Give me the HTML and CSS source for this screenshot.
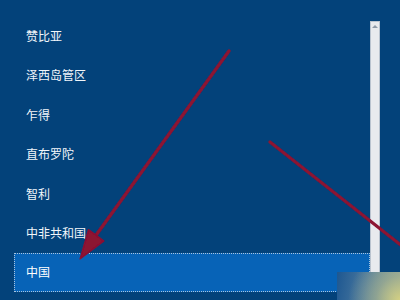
FILE: index.html
```html
<!DOCTYPE html>
<html lang="zh">
<head>
<meta charset="utf-8">
<link rel="stylesheet" href="styles.css">
</head>
<body>
<div class="screen">
  <ul class="list">
    <li class="item">赞比亚</li>
    <li class="item">泽西岛管区</li>
    <li class="item">乍得</li>
    <li class="item">直布罗陀</li>
    <li class="item">智利</li>
    <li class="item">中非共和国</li>
    <li class="item selected">中国</li>
  </ul>
  <div class="scrollbar"><span class="up"></span></div>
</div>
<svg class="arrows" width="400" height="300" viewBox="0 0 400 300">
  <defs>
    <filter id="soft" x="-10%" y="-10%" width="120%" height="120%">
      <feGaussianBlur stdDeviation="0.5"/>
    </filter>
  </defs>
  <g filter="url(#soft)" fill="#8c1232" stroke="#8c1232">
    <line x1="229" y1="51" x2="94" y2="238" stroke-width="3.4" stroke-linecap="round"/>
    <polygon points="80,259 88.5,229.5 104,241" stroke-width="1.2" stroke-linejoin="round"/>
    <line x1="270" y1="142" x2="402" y2="246" stroke-width="3.2" stroke-linecap="round"/>
  </g>
</svg>
<div class="mark"></div>
</body>
</html>
```
FILE: styles.css
```css
html, body {
  margin: 0;
  padding: 0;
}
body {
  width: 400px;
  height: 300px;
  overflow: hidden;
  background: #03427a;
  font-family: "Noto Sans CJK SC", "Microsoft YaHei", sans-serif;
  position: relative;
}
.screen {
  display: flex;
  align-items: flex-start;
  padding: 0 20px 0 14px;
  height: 300px;
  box-sizing: border-box;
}
.list {
  flex: 1;
  list-style: none;
  margin: 0;
  padding: 16.3px 0 0 0;
}
.item {
  height: 39.4px;
  display: flex;
  align-items: center;
  padding-left: 12px;
  box-sizing: border-box;
  color: #f2f6fa;
  font-size: 12px;
  line-height: 1;
}
.selected {
  background: #0763b7;
  outline: 1px dotted #a9c3dd;
  outline-offset: -1px;
  color: #ffffff;
}
.scrollbar {
  width: 10px;
  margin-top: 21px;
  height: 270px;
  background: #e8eaee;
  box-sizing: border-box;
  border: 1px solid #b9c3cf;
  display: flex;
  justify-content: center;
  padding-top: 3px;
}
.up {
  width: 0;
  height: 0;
  border-left: 3px solid transparent;
  border-right: 3px solid transparent;
  border-bottom: 3px solid #8e9aa8;
}
.arrows {
  position: absolute;
  left: 0;
  top: 0;
}
.mark {
  position: absolute;
  left: 337px;
  top: 272px;
  width: 63px;
  height: 28px;
  background:
    radial-gradient(circle at 100% 100%, rgba(214, 210, 130, 0.95) 0%, rgba(170, 180, 140, 0.6) 35%, rgba(60, 110, 150, 0) 75%),
    linear-gradient(100deg, #1d5791 0%, #4a789e 45%, #94a79a 100%);
}
```
